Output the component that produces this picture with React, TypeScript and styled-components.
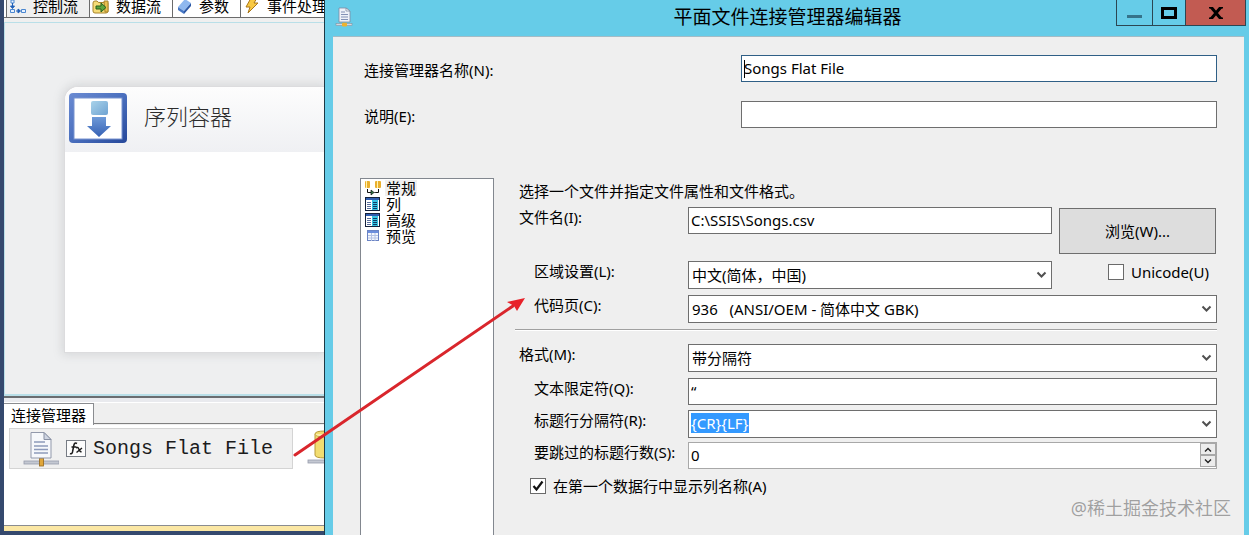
import React from "react";
import styled, { createGlobalStyle } from "styled-components";

const cyan = "#66cce8";
const face = "#efefef";
const uiFont = '"Noto Sans", "Noto Sans CJK SC", sans-serif';

const GlobalStyle = createGlobalStyle`
  *, *::before, *::after { box-sizing: border-box; }
  body { margin: 0; overflow: hidden; background: #35496e; }
  button, input, select { font: inherit; color: inherit; margin: 0; border-radius: 0; }
`;

const Desktop = styled.main`
  position: relative;
  display: flex;
  height: 100vh;
  overflow: hidden;
  color: #000;
  font: 15px/20px ${uiFont};
`;

/* ---------- designer window ---------- */

const Designer = styled.section`
  flex: 0 0 324px;
  display: flex;
  flex-direction: column;
  padding: 0 0 4px 4px;
  background: #35496e;
  overflow: hidden;
`;

const TabStrip = styled.nav`
  flex: none;
  display: flex;
  height: 18px;
  padding-left: 3px;
  background: #fff;
  border-bottom: 1px solid #6b6b6b;
  overflow: hidden;
`;

const DesignerTab = styled.button<{ $active?: boolean }>`
  flex: none;
  display: flex;
  align-items: center;
  gap: 7px;
  padding: 0 11px 6px 2px;
  border: 0;
  border-right: 1px solid #6b6b6b;
  background: ${(p) => (p.$active ? face : "#fff")};
  line-height: 12px;
  white-space: nowrap;
  &:first-child { box-shadow: -1px 0 #6b6b6b; }
`;

const Canvas = styled.div`
  flex: 1;
  min-height: 0;
  padding: 63px 0 0 59px;
  margin-top: 4px;
  background: #eeeff0;
  border: 1px solid #b9dfe8;
  border-right: 0;
  border-bottom-width: 2px;
  overflow: hidden;
`;

const CanvasFrame = styled.div`
  flex: 1;
  min-height: 0;
  display: flex;
  flex-direction: column;
  background: ${face};
`;

const SequenceCard = styled.article`
  height: 267px;
  background: #fff;
  border: 1px solid #dcdcde;
  border-right: 0;
  border-radius: 14px 0 0 0;
  box-shadow: 0 0 10px 2px rgba(120, 125, 130, 0.2);
  overflow: hidden;
`;

const SequenceHeader = styled.header`
  display: flex;
  align-items: center;
  gap: 17px;
  height: 65px;
  padding: 0 0 3px 4px;
  background: linear-gradient(#fdfdfd, #eff0f3);
  font: 22px/28px "Liberation Serif", "Noto Sans CJK SC", serif;
  font-weight: 300;
  color: #2c2c2c;
  white-space: nowrap;
`;

const PanelTabs = styled.div`
  flex: none;
  display: flex;
  align-items: flex-end;
  height: 29px;
  padding-top: 2px;
  background: linear-gradient(#6a6d70 0 2px, #e9eaee 2px 6px, #fff 6px 7px, ${face} 7px);
`;

const PanelTab = styled.button`
  flex: none;
  height: 22px;
  padding: 0 7px;
  border: 1px solid #8a8c90;
  border-width: 1px 1px 0 0;
  background: #fff;
  line-height: 18px;
  white-space: nowrap;
`;

const PanelTabsRule = styled.div`
  flex: 1;
  height: 1px;
  margin-bottom: 1px;
  background: #808080;
`;

const ConnectionTray = styled.div`
  flex: none;
  display: flex;
  align-items: flex-start;
  gap: 14px;
  height: 101px;
  padding: 3px 0 0 5px;
  background: #fff;
  border-bottom: 1px solid #8a8c90;
  overflow: hidden;
`;

const Connection = styled.button`
  flex: none;
  display: flex;
  align-items: center;
  gap: 7px;
  width: 284px;
  height: 41px;
  padding: 0 0 0 13px;
  border: 1px solid #d4d4d4;
  background: #f0f0f0;
  font: 20px/24px "Liberation Mono", "Noto Sans CJK SC", monospace;
  color: #1c1c1c;
  white-space: nowrap;
`;

const NextConnection = styled.div`
  flex: none;
  padding-top: 2px;
`;

const StatusEdge = styled.div`
  flex: none;
  height: 5px;
  background: #fbe7a4;
`;

/* ---------- editor dialog ---------- */

const Dialog = styled.section`
  flex: 1;
  min-width: 0;
  display: flex;
  flex-direction: column;
  padding: 0 5px 0 8px;
  border-left: 1px solid #1e3a46;
  background: ${cyan};
`;

const TitleBar = styled.header`
  flex: none;
  display: grid;
  grid-template-columns: 128px 1fr 132px;
  align-items: start;
  height: 36px;
  padding-left: 2px;
`;

const TitleIcon = styled.span`
  padding-top: 7px;
`;

const Title = styled.h1`
  margin: 0;
  padding-top: 5px;
  font-size: 19px;
  line-height: 24px;
  font-weight: 400;
  text-align: center;
`;

const Caption = styled.div`
  display: flex;
  justify-self: end;
  margin-right: -2px;
  height: 26px;
  border: 1px solid #2b4652;
  border-top: 0;
`;

const CaptionButton = styled.button<{ $width: number; $danger?: boolean }>`
  display: grid;
  place-items: center;
  width: ${(p) => p.$width}px;
  padding: 0;
  border: 0;
  background: ${(p) => (p.$danger ? "#c25b52" : cyan)};
  & + & { border-left: 1px solid #2b4652; }
`;

const Body = styled.form`
  flex: 1;
  min-height: 0;
  display: flex;
  flex-direction: column;
  gap: 50px;
  padding: 18px 27px 0;
  background: ${face};
  border-top: 1px solid #a3bcc6;
`;

const Identity = styled.div`
  flex: none;
  display: grid;
  grid-template-columns: 381px minmax(0, 1fr);
  row-gap: 19px;
`;

const IdentityLabel = styled.label`
  padding: 5px 0 0 4px;
`;

const FieldBox = styled.span<{ $tall?: boolean; $focused?: boolean; $soft?: boolean }>`
  position: relative;
  display: flex;
  align-items: center;
  min-width: 0;
  height: ${(p) => (p.$tall ? 28 : 27)}px;
  border: 1px solid ${(p) => (p.$focused ? "#2f5f86" : p.$soft ? "#a8a8a8" : "#6e6e6e")};
  background: #fff;
`;

const Caret = styled.i`
  position: absolute;
  left: 2px;
  top: 4px;
  width: 1px;
  height: 18px;
  background: #000;
`;

const TextInput = styled.input`
  flex: 1;
  min-width: 0;
  height: 100%;
  padding: 0 2px 2px;
  border: 0;
  outline: 0;
  background: transparent;
`;

const SelectInput = styled.select`
  flex: 1;
  min-width: 0;
  height: 100%;
  padding: 0 24px 0 3px;
  border: 0;
  outline: 0;
  appearance: none;
  background: transparent;
  white-space: pre;
`;

const SelectedInput = styled.input`
  field-sizing: content;
  height: 20px;
  margin: 0 auto 2px 2px;
  padding: 0;
  border: 0;
  outline: 0;
  background: #3399ff;
  color: #fff;
`;

const SelectArrow = styled.span`
  position: absolute;
  right: 4px;
  top: 0;
  bottom: 0;
  display: flex;
  align-items: center;
  pointer-events: none;
`;

const ArrowButton = styled.button`
  display: flex;
  align-items: center;
  height: 100%;
  padding: 0 4px;
  border: 0;
  background: transparent;
`;

const Workspace = styled.div`
  flex: 1;
  min-height: 0;
  display: grid;
  grid-template-columns: 134px minmax(0, 1fr);
  column-gap: 21px;
`;

const PageList = styled.ul`
  margin: 0;
  padding: 1px 0 0 4px;
  list-style: none;
  background: #fff;
  border: 1px solid #82878f;
  border-bottom: 0;
`;

const PageItem = styled.li`
  display: flex;
  height: 16px;
`;

const PageButton = styled.button<{ $active?: boolean }>`
  display: flex;
  align-items: center;
  gap: 4px;
  height: 16px;
  padding: 0;
  border: 0;
  background: none;
  line-height: 16px;
  white-space: nowrap;
  span {
    padding: 0 1px;
    line-height: 16px;
    background: ${(p) => (p.$active ? "#f0f0f0" : "transparent")};
  }
`;

const Settings = styled.div`
  min-width: 0;
`;

const Intro = styled.p`
  margin: 0;
  padding: 3px 4px 6px;
  white-space: nowrap;
`;

const Row = styled.div<{ $aside?: boolean; $gap?: number }>`
  display: grid;
  grid-template-columns: ${(p) => (p.$aside ? "173px minmax(0, 1fr) 165px" : "173px minmax(0, 1fr)")};
  align-items: start;
  margin-top: ${(p) => p.$gap ?? 0}px;
`;

const RowLabel = styled.label<{ $indent?: boolean }>`
  padding: 0 0 0 ${(p) => (p.$indent ? 19 : 4)}px;
  white-space: nowrap;
`;

const BrowseButton = styled.button`
  height: 46px;
  margin: 1px 1px 0 7px;
  border: 1px solid #6e6e6e;
  background: #dddddd;
`;

const CheckLabel = styled.label<{ $end?: boolean }>`
  display: flex;
  align-items: center;
  gap: 7px;
  justify-content: ${(p) => (p.$end ? "flex-end" : "flex-start")};
  padding: ${(p) => (p.$end ? "1px 8px 0 0" : "7px 0 0 15px")};
  white-space: nowrap;
`;

const CheckFrame = styled.span`
  position: relative;
  display: flex;
  svg {
    position: absolute;
    inset: 0;
    pointer-events: none;
  }
  input:not(:checked) + svg { display: none; }
`;

const CheckInput = styled.input`
  width: 16px;
  height: 16px;
  appearance: none;
  border: 1px solid #6a6a6a;
  background: #fff;
`;

const Divider = styled.hr`
  height: 2px;
  margin: 6px 0 13px;
  border: 0;
  border-top: 1px solid #a0a0a0;
  background: #fff;
`;

const Spinner = styled.span`
  display: flex;
  flex-direction: column;
  align-self: stretch;
  width: 16px;
  padding-bottom: 1px;
`;

const SpinButton = styled.button`
  flex: 1;
  display: grid;
  place-items: center;
  padding: 0;
  border: 1px solid #a8a8a8;
  background: #ececec;
`;

const Watermark = styled.div`
  position: absolute;
  right: 18px;
  bottom: 14px;
  font-size: 18px;
  line-height: 26px;
  color: #a0a0a0;
  text-shadow: 0 0 1px #fff;
`;

const ArrowLayer = styled.svg`
  position: absolute;
  left: 290px;
  top: 290px;
  pointer-events: none;
`;

/* ---------- drawings ---------- */

const ControlFlowIcon = () => (
  <svg width="17" height="17" viewBox="0 0 17 17" fill="none">
    <path d="M2 3h3v3H2zM1.500 12.500h4v3h-4zM12.500 12.500h4v3h-4z" fill="#e6f1ff" stroke="#4b87d0" />
    <path d="M3.500 6v4M1.500 9h4l-2 2.500zM7 14h3M9 12l2.500 2L9 16z" fill="#1f5fb8" stroke="#1f5fb8" />
  </svg>
);

const DataFlowIcon = () => (
  <svg width="17" height="17" viewBox="0 0 17 17">
    <path d="M1 6q0-2 2-2h2q1 2 3 1.500h8V14q0 2-2 2H3q-2 0-2-2z" fill="#f5dc78" stroke="#a8842c" />
    <path d="M12 4h4v11h-3z" fill="#e8bf4e" stroke="#a8842c" />
    <path d="M4 9h5V6l5 4.500L9 15v-3H4z" fill="#5ca53c" stroke="#255f1c" />
  </svg>
);

const ParameterIcon = () => (
  <svg width="17" height="17" viewBox="0 0 17 17">
    <path d="M3 10l7-8 6 4-7 8z" fill="#8fb8ef" />
    <path d="M3 10l6 4v3l-6-4z" fill="#4576c4" />
    <path d="M9 14l7-8v3l-7 8z" fill="#2c58a5" />
  </svg>
);

const EventIcon = () => (
  <svg width="17" height="17" viewBox="0 0 17 17">
    <path d="M8 1h6l-3 5h4L5 16l2-6H3z" fill="#f8c944" stroke="#a9761b" strokeLinejoin="round" />
  </svg>
);

const SequenceIcon = () => (
  <svg width="58" height="50" viewBox="0 0 58 50">
    <defs>
      <linearGradient id="seqFrame" x1="0" y1="0" x2="1" y2="1">
        <stop offset="0" stopColor="#6b8bd2" />
        <stop offset="0.5" stopColor="#4a6fbe" />
        <stop offset="1" stopColor="#26489a" />
      </linearGradient>
      <linearGradient id="seqBox" x1="0" y1="0" x2="1" y2="1">
        <stop offset="0" stopColor="#a9d3ea" />
        <stop offset="1" stopColor="#6fa3d2" />
      </linearGradient>
      <linearGradient id="seqArrow" x1="0" y1="0" x2="0" y2="1">
        <stop offset="0" stopColor="#6e9ad8" />
        <stop offset="1" stopColor="#3560b4" />
      </linearGradient>
    </defs>
    <rect width="58" height="50" rx="4" fill="url(#seqFrame)" />
    <rect x="5" y="5" width="48" height="41" fill="#fff" stroke="#7893d0" />
    <rect x="22" y="8" width="17" height="14" rx="2" fill="url(#seqBox)" />
    <path d="M23 24h14v9h5L30 44 18 33h5z" fill="url(#seqArrow)" />
  </svg>
);

const FlatFileIcon = ({ size = 36 }: { size?: number }) => (
  <svg width={size} height={size} viewBox="0 0 36 36">
    <rect x="1" y="30" width="35" height="3" fill="#c4c8d2" stroke="#969bab" strokeWidth="0.800" />
    <rect x="16.500" y="27" width="4" height="8" fill="#e0a63a" stroke="#94671c" strokeWidth="0.800" />
    <path d="M8 1.500h13l7 7V27H8z" fill="#f6f8fb" stroke="#9299ab" />
    <path d="M21 1.500v7h7z" fill="#cfd5e2" stroke="#8890a3" />
    <path d="M11 11h11M11 15h14M11 18.500h14M11 22h14" stroke="#8d9abb" strokeWidth="1.500" />
  </svg>
);

const DialogIcon = () => (
  <svg width="18" height="20" viewBox="0 0 18 20">
    <rect x="1" y="16.500" width="16" height="2" fill="#d4d8df" stroke="#7e8794" strokeWidth="0.500" />
    <rect x="7" y="15.500" width="5" height="4" rx="1" fill="#eeb22e" />
    <path d="M4 1h7l4 3v11H4z" fill="#eef1f8" stroke="#7f8ba2" strokeWidth="0.800" />
    <path d="M11 1v3h4z" fill="#fff" stroke="#7f8ba2" strokeWidth="0.800" />
    <path d="M6 5h4M6 7.500h7M6 10h7M6 12.500h7" stroke="#8391b5" />
  </svg>
);

const ExpressionIcon = () => (
  <svg width="20" height="17" viewBox="0 0 20 17" fill="none" stroke="#1a1a1a">
    <rect x="0.500" y="0.500" width="19" height="16" fill="#fcfcfc" stroke="#777c84" />
    <path d="M11 3.500q-2.500-1.500-3.200 2L6.500 12q-.6 2.500-2.500 1.500M5.500 7h5" strokeWidth="1.500" />
    <path d="M10 8q2-1.500 2.800 1t2.700 3M16 8l-5.500 4.500" strokeWidth="1.400" />
  </svg>
);

const DatabaseIcon = () => (
  <svg width="36" height="36" viewBox="0 0 36 36">
    <rect x="1" y="30" width="35" height="3" fill="#c4c8d2" stroke="#969bab" strokeWidth="0.800" />
    <path d="M8 4q0-3 10-3t10 3v21q0 3-10 3T8 25z" fill="#f2dd70" stroke="#b79a38" />
    <path d="M8 4q0 3 10 3t10-3" fill="#faf0ac" stroke="#c8ad4c" />
  </svg>
);

const GeneralIcon = () => (
  <svg width="16" height="16" viewBox="0 0 16 16">
    <rect x="0" y="1" width="5" height="7" rx="1" fill="#eab02f" />
    <rect x="1" y="1" width="1" height="7" fill="#fff3b0" />
    <rect x="10" y="1" width="6" height="7" rx="1" fill="#eab02f" />
    <rect x="12" y="1" width="1" height="7" fill="#fff3b0" />
    <path d="M2.500 9v3.500h4M13.500 9v3.500h-3" fill="none" stroke="#111" />
    <path d="M6 10l3 2.500L6 15zM9 12.500h2" fill="#2f7a45" stroke="#111" strokeWidth="0.700" />
  </svg>
);

const ColumnsIcon = () => (
  <svg width="16" height="16" viewBox="0 0 16 16">
    <rect x="0.500" y="1.500" width="14" height="13" fill="#fff" stroke="#14213c" />
    <rect x="1" y="2" width="13" height="2" fill="#2f5cae" />
    <rect x="7" y="4" width="6" height="10" fill="#37c4e4" />
    <path d="M2 6.500h4M2 8.500h4M2 10.500h4M2 12.500h4" stroke="#5a6f9c" />
    <path d="M8 6.500h4M8 8.500h4M8 10.500h4M8 12.500h4" stroke="#0e3c66" />
  </svg>
);

const PreviewIcon = () => (
  <svg width="16" height="16" viewBox="0 0 16 16">
    <rect x="2.500" y="2.500" width="11" height="10" fill="#f4f7fd" stroke="#6a83c4" />
    <rect x="3" y="3" width="10" height="2" fill="#6d8fdd" />
    <path d="M3 7.500h10M3 10h10M6.500 5v8M10 5v8" stroke="#b4c2e4" />
  </svg>
);

const Chevron = () => (
  <svg width="11" height="8" viewBox="0 0 11 8">
    <path d="M1.500 1.500l4 4 4-4" fill="none" stroke="#505050" strokeWidth="2" />
  </svg>
);

const SpinGlyph = ({ up }: { up?: boolean }) => (
  <svg width="8" height="5" viewBox="0 0 8 5">
    <path d={up ? "M1 4.500l3-3 3 3" : "M1 .5l3 3 3-3"} fill="none" stroke="#222" strokeWidth="1.400" />
  </svg>
);

const Tick = () => (
  <svg width="16" height="16" viewBox="0 0 16 16">
    <path d="M3.500 8l3 3.500 6-8" fill="none" stroke="#111" strokeWidth="2.200" />
  </svg>
);

/* ---------- composed controls ---------- */

const Select = ({ id, value }: { id: string; value: string }) => (
  <FieldBox $tall>
    <SelectInput id={id} defaultValue={value}>
      <option value={value}>{value}</option>
    </SelectInput>
    <SelectArrow>
      <Chevron />
    </SelectArrow>
  </FieldBox>
);

const Check = ({ label, checked, end }: { label: string; checked?: boolean; end?: boolean }) => (
  <CheckLabel $end={end}>
    <CheckFrame>
      <CheckInput type="checkbox" defaultChecked={checked} />
      <Tick />
    </CheckFrame>
    {label}
  </CheckLabel>
);

const tabs = [
  { label: "控制流", icon: <ControlFlowIcon /> },
  { label: "数据流", icon: <DataFlowIcon /> },
  { label: "参数", icon: <ParameterIcon /> },
  { label: "事件处理", icon: <EventIcon /> },
];

const pages = [
  { label: "常规", icon: <GeneralIcon /> },
  { label: "列", icon: <ColumnsIcon /> },
  { label: "高级", icon: <ColumnsIcon /> },
  { label: "预览", icon: <PreviewIcon /> },
];

export default function App() {
  return (
    <Desktop lang="zh-CN">
      <GlobalStyle />
      <Designer>
        <TabStrip>
          {tabs.map((t, i) => (
            <DesignerTab key={t.label} type="button" $active={i === 0}>
              {t.icon}
              {t.label}
            </DesignerTab>
          ))}
        </TabStrip>
        <CanvasFrame>
          <Canvas>
            <SequenceCard>
              <SequenceHeader>
                <SequenceIcon />
                序列容器
              </SequenceHeader>
            </SequenceCard>
          </Canvas>
        </CanvasFrame>
        <PanelTabs>
          <PanelTab type="button">连接管理器</PanelTab>
          <PanelTabsRule />
        </PanelTabs>
        <ConnectionTray>
          <Connection type="button">
            <FlatFileIcon />
            <ExpressionIcon />
            Songs Flat File
          </Connection>
          <NextConnection>
            <DatabaseIcon />
          </NextConnection>
        </ConnectionTray>
        <StatusEdge />
      </Designer>

      <Dialog>
        <TitleBar>
          <TitleIcon>
            <DialogIcon />
          </TitleIcon>
          <Title>平面文件连接管理器编辑器</Title>
          <Caption>
            <CaptionButton type="button" aria-label="最小化" $width={35}>
              <svg width="15" height="24" viewBox="0 0 15 24">
                <rect y="14" width="15" height="3" fill="#35738a" />
              </svg>
            </CaptionButton>
            <CaptionButton type="button" aria-label="最大化" $width={33}>
              <svg width="16" height="12" viewBox="0 0 16 12">
                <rect x="1.500" y="1.500" width="13" height="9" fill="none" stroke="#000" strokeWidth="3" />
              </svg>
            </CaptionButton>
            <CaptionButton type="button" aria-label="关闭" $width={60} $danger>
              <svg width="14" height="12" viewBox="0 0 14 12">
                <path d="M2 0l10 12M12 0L2 12" stroke="#000" strokeWidth="3" />
                <path d="M0 .7h4M10 .7h4M0 11.300h4M10 11.300h4" stroke="#000" strokeWidth="1.400" />
              </svg>
            </CaptionButton>
          </Caption>
        </TitleBar>
        <Body>
          <Identity>
            <IdentityLabel htmlFor="name">连接管理器名称(N):</IdentityLabel>
            <FieldBox $focused>
              <TextInput id="name" defaultValue="Songs Flat File" />
              <Caret />
            </FieldBox>
            <IdentityLabel htmlFor="description">说明(E):</IdentityLabel>
            <FieldBox>
              <TextInput id="description" />
            </FieldBox>
          </Identity>
          <Workspace>
            <PageList>
              {pages.map((p, i) => (
                <PageItem key={p.label}>
                  <PageButton type="button" $active={i === 0}>
                    {p.icon}
                    <span>{p.label}</span>
                  </PageButton>
                </PageItem>
              ))}
            </PageList>
            <Settings>
              <Intro>选择一个文件并指定文件属性和文件格式。</Intro>
              <Row $aside>
                <RowLabel htmlFor="file">文件名(I):</RowLabel>
                <FieldBox>
                  <TextInput id="file" defaultValue="C:\SSIS\Songs.csv" />
                </FieldBox>
                <BrowseButton type="button">浏览(W)...</BrowseButton>
              </Row>
              <Row $aside $gap={7}>
                <RowLabel htmlFor="locale" $indent>区域设置(L):</RowLabel>
                <Select id="locale" value="中文(简体，中国)" />
                <Check label="Unicode(U)" end />
              </Row>
              <Row $gap={6}>
                <RowLabel htmlFor="codepage" $indent>代码页(C):</RowLabel>
                <Select id="codepage" value={"936\u00a0\u00a0 (ANSI/OEM - 简体中文 GBK)"} />
              </Row>
              <Divider />
              <Row>
                <RowLabel htmlFor="format">格式(M):</RowLabel>
                <Select id="format" value="带分隔符" />
              </Row>
              <Row $gap={6}>
                <RowLabel htmlFor="qualifier" $indent>文本限定符(Q):</RowLabel>
                <FieldBox>
                  <TextInput id="qualifier" defaultValue="“" />
                </FieldBox>
              </Row>
              <Row $gap={5}>
                <RowLabel htmlFor="delimiter" $indent>标题行分隔符(R):</RowLabel>
                <FieldBox $tall>
                  <SelectedInput id="delimiter" defaultValue="{CR}{LF}" />
                  <ArrowButton type="button" aria-label="展开">
                    <Chevron />
                  </ArrowButton>
                </FieldBox>
              </Row>
              <Row $gap={4}>
                <RowLabel htmlFor="skip" $indent>要跳过的标题行数(S):</RowLabel>
                <FieldBox $soft>
                  <TextInput id="skip" inputMode="numeric" defaultValue="0" />
                  <Spinner>
                    <SpinButton type="button" aria-label="增加"><SpinGlyph up /></SpinButton>
                    <SpinButton type="button" aria-label="减少"><SpinGlyph /></SpinButton>
                  </Spinner>
                </FieldBox>
              </Row>
              <Check label="在第一个数据行中显示列名称(A)" checked />
            </Settings>
          </Workspace>
        </Body>
      </Dialog>

      <ArrowLayer width="240" height="172" viewBox="290 290 240 172">
        <path d="M295 455L513 306" stroke="#d9262c" strokeWidth="3" strokeLinecap="round" />
        <path d="M525 298l-8 13-3-5-7-4z" fill="#e8222a" />
      </ArrowLayer>
      <Watermark>@稀土掘金技术社区</Watermark>
    </Desktop>
  );
}
